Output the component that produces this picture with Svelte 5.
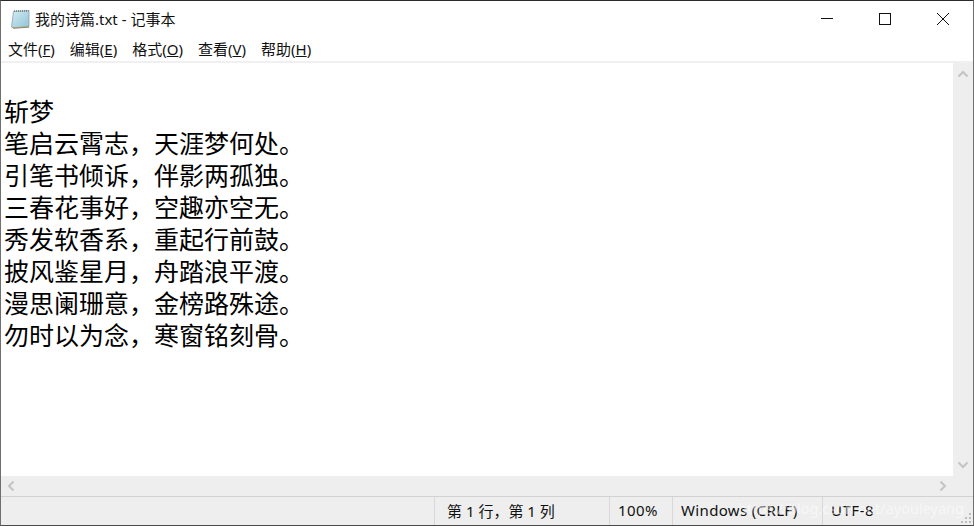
<script lang="ts">
	const menus = [
		{ label: '文件', key: 'F' },
		{ label: '编辑', key: 'E' },
		{ label: '格式', key: 'O' },
		{ label: '查看', key: 'V' },
		{ label: '帮助', key: 'H' }
	];

	const lines = [
		'斩梦',
		'笔启云霄志，天涯梦何处。',
		'引笔书倾诉，伴影两孤独。',
		'三春花事好，空趣亦空无。',
		'秀发软香系，重起行前鼓。',
		'披风鉴星月，舟踏浪平渡。',
		'漫思阑珊意，金榜路殊途。',
		'勿时以为念，寒窗铭刻骨。'
	];
</script>

<div class="window">
	<header class="titlebar">
		<svg class="app-icon" width="20" height="20" viewBox="0 0 20 20">
			<defs>
				<linearGradient id="page" x1="0" y1="0" x2="1" y2="1">
					<stop offset="0" stop-color="#d5ecf2" />
					<stop offset="1" stop-color="#8fc4d6" />
				</linearGradient>
			</defs>
			<path d="M3.5 2.5 L19 1.5 L19 17.5 L3.5 19 L1.5 18 Z" fill="url(#page)" stroke="#7d97a3" stroke-width="0.7" />
			<path d="M2 18.5 L19 17.5 L19 18.8 L3.5 19.8 Z" fill="#a08f68" />
			<path d="M4 2 H18.5" stroke="#6c7478" stroke-width="1.6" stroke-dasharray="1 1" />
		</svg>
		<span class="title">我的诗篇.txt - 记事本</span>
		<div class="controls">
			<svg width="14" height="14" viewBox="0 0 14 14"><path d="M1 6.5 H13" stroke="#111" /></svg>
			<svg width="14" height="14" viewBox="0 0 14 14"><rect x="1.5" y="1.5" width="11" height="11" fill="none" stroke="#111" /></svg>
			<svg width="14" height="14" viewBox="0 0 14 14"><path d="M1 1 L13 13 M13 1 L1 13" stroke="#111" /></svg>
		</div>
	</header>

	<nav class="menubar">
		{#each menus as menu}
			<span class="menu-item">{menu.label}(<u>{menu.key}</u>)</span>
		{/each}
	</nav>

	<div class="editor">
		<main class="text">
			<div class="blank"></div>
			{#each lines as line}
				<div class="line">{line}</div>
			{/each}
		</main>
		<aside class="vscroll">
			<svg width="12" height="8" viewBox="0 0 12 8"><path d="M1.5 6.5 L6 2 L10.5 6.5" fill="none" stroke="#c4c4c4" stroke-width="2" /></svg>
			<svg width="12" height="8" viewBox="0 0 12 8"><path d="M1.5 1.5 L6 6 L10.5 1.5" fill="none" stroke="#c4c4c4" stroke-width="2" /></svg>
		</aside>
	</div>

	<div class="hscroll">
		<svg width="8" height="12" viewBox="0 0 8 12"><path d="M6.5 1.5 L2 6 L6.5 10.5" fill="none" stroke="#c4c4c4" stroke-width="2" /></svg>
		<svg width="8" height="12" viewBox="0 0 8 12"><path d="M1.5 1.5 L6 6 L1.5 10.5" fill="none" stroke="#c4c4c4" stroke-width="2" /></svg>
	</div>

	<footer class="statusbar">
		<span class="cell pos">第 1 行，第 1 列</span>
		<span class="cell zoom">100%</span>
		<span class="cell eol">Windows (CRLF)</span>
		<span class="cell enc">UTF-8</span>
		<span class="watermark">https://blog.csdn.net/ayouleyang</span>
		<svg class="grip" width="12" height="12" viewBox="0 0 12 12" fill="#bdbdbd">
			<rect x="8" y="0" width="2" height="2" />
			<rect x="4" y="4" width="2" height="2" />
			<rect x="8" y="4" width="2" height="2" />
			<rect x="0" y="8" width="2" height="2" />
			<rect x="4" y="8" width="2" height="2" />
			<rect x="8" y="8" width="2" height="2" />
		</svg>
	</footer>
</div>

<style>
	:global(body) {
		margin: 0;
		background: #fff;
	}

	.window {
		width: 974px;
		height: 526px;
		box-sizing: border-box;
		border: 1px solid #6f6f6f;
		border-top-color: #2b2b2b;
		border-bottom-color: #4a4a4a;
		display: flex;
		flex-direction: column;
		font-family: "Noto Sans", "Noto Sans CJK SC", sans-serif;
		font-size: 15px;
		color: #111;
		overflow: hidden;
	}

	.titlebar {
		height: 36px;
		flex: none;
		display: flex;
		align-items: center;
		padding-left: 9px;
		gap: 5px;
	}

	.title {
		margin-top: -2px;
	}

	.controls {
		margin-left: auto;
		display: flex;
		align-items: center;
		gap: 44px;
		padding-right: 23px;
	}

	.menubar {
		height: 24px;
		flex: none;
		box-sizing: content-box;
		display: flex;
		align-items: center;
		gap: 15px;
		padding-left: 7px;
		border-bottom: 2px solid #f0f0f0;
	}

	.menu-item {
		margin-top: -2px;
	}

	.editor {
		flex: 1;
		min-height: 0;
		display: flex;
	}

	.text {
		flex: 1;
		padding-left: 3px;
		font-size: 25px;
		line-height: 32px;
		color: #000;
		font-family: "Noto Sans CJK SC", sans-serif;
		margin-top: -1px;
	}

	.blank {
		height: 32px;
	}

	.line {
		white-space: nowrap;
	}

	.vscroll {
		width: 20px;
		flex: none;
		background: #eee;
		display: flex;
		flex-direction: column;
		justify-content: space-between;
		align-items: center;
		padding: 7px 0;
		box-sizing: border-box;
	}

	.hscroll {
		height: 20px;
		flex: none;
		background: #eee;
		display: flex;
		justify-content: space-between;
		align-items: center;
		padding: 0 26px 0 6px;
	}

	.statusbar {
		position: relative;
		height: 29px;
		flex: none;
		background: #eee;
		border-top: 1px solid #d2d2d2;
		box-sizing: border-box;
		display: flex;
		align-items: center;
		padding-left: 433px;
	}

	.cell {
		height: 100%;
		box-sizing: border-box;
		display: flex;
		align-items: center;
		padding-left: 12px;
		padding-bottom: 2px;
		border-left: 1px solid #d8d8d8;
	}

	.pos {
		width: 175px;
	}

	.zoom {
		width: 63px;
		padding-left: 8px;
		letter-spacing: 0.4px;
	}

	.eol {
		width: 150px;
		padding-left: 8px;
		letter-spacing: 0.35px;
	}

	.enc {
		padding-left: 8px;
		letter-spacing: 0.5px;
	}

	.watermark {
		position: absolute;
		left: 737px;
		top: 1px;
		font-size: 14.5px;
		color: rgba(255, 255, 255, 0.55);
		white-space: nowrap;
	}

	.grip {
		position: absolute;
		right: 0;
		bottom: 0;
	}
</style>
